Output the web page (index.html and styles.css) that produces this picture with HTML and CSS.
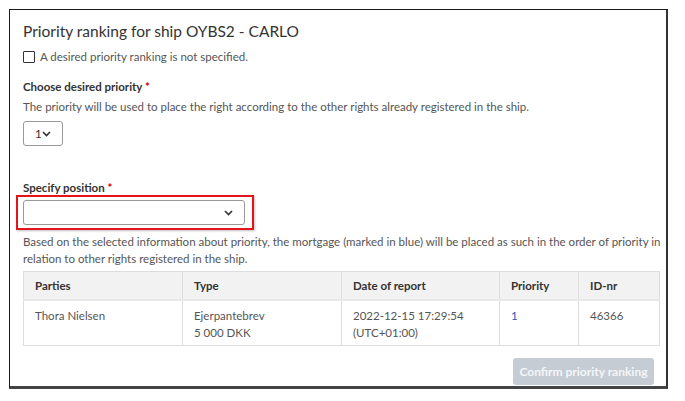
FILE: index.html
```html
<!DOCTYPE html>
<html>
<head>
    <title>Priority ranking</title>
    <link rel="stylesheet" href="styles.css">
</head>
<body>
    <div class="panel">
        <h1>Priority ranking for ship OYBS2 - CARLO</h1>

        <label class="check">
            <span class="box"></span>
            A desired priority ranking is not specified.
        </label>

        <div class="field">
            <div class="label">Choose desired priority <span class="req">*</span></div>
            <p class="hint">The priority will be used to place the right according to the other rights already registered in the ship.</p>
            <div class="select small">
                <span>1</span>
                <svg width="9" height="6" viewBox="0 0 9 6"><path d="M1 1 L4.5 4.5 L8 1" fill="none" stroke="#333" stroke-width="1.6"/></svg>
            </div>
        </div>

        <div class="field position">
            <div class="label">Specify position <span class="req">*</span></div>
            <div class="highlight">
                <div class="select wide">
                    <span></span>
                    <svg width="9" height="6" viewBox="0 0 9 6"><path d="M1 1 L4.5 4.5 L8 1" fill="none" stroke="#333" stroke-width="1.6"/></svg>
                </div>
            </div>
        </div>

        <p class="note">Based on the selected information about priority, the mortgage (marked in blue) will be placed as such in the order of priority in relation to other rights registered in the ship.</p>

        <table class="rights">
            <thead>
                <tr>
                    <th class="c1">Parties</th>
                    <th class="c2">Type</th>
                    <th class="c3">Date of report</th>
                    <th class="c4">Priority</th>
                    <th class="c5">ID-nr</th>
                </tr>
            </thead>
            <tbody>
                <tr>
                    <td>Thora Nielsen</td>
                    <td>Ejerpantebrev<br>5 000 DKK</td>
                    <td>2022-12-15 17:29:54<br>(UTC+01:00)</td>
                    <td class="blue">1</td>
                    <td>46366</td>
                </tr>
            </tbody>
        </table>

        <div class="actions">
            <button class="confirm" disabled>Confirm priority ranking</button>
        </div>
    </div>
</body>
</html>
```

FILE: styles.css
```css
body {
    margin: 0;
    padding: 9px 0 0 9px;
    background-color: #fff;
    font-family: Lato, "Open Sans", sans-serif;
    color: #555;
    font-size: 11.5px;
}

.panel {
    width: 659px;
    height: 380px;
    border: 1px solid #1a1a1a;
    border-right: 2px solid #333;
    border-bottom: 3px solid #444;
    padding: 11px 0 0 13px;
    box-sizing: border-box;
}

h1 {
    margin: 0;
    font-size: 15.5px;
    font-weight: normal;
    color: #333;
    line-height: 20px;
}

.check {
    display: flex;
    align-items: center;
    gap: 5px;
    margin-top: 8px;
    line-height: 16px;
}

.box {
    width: 10px;
    height: 10px;
    border: 1.5px solid #333;
    border-radius: 1px;
}

.field {
    margin-top: 14px;
}

.label {
    font-weight: bold;
    color: #333;
    line-height: 16px;
}

.req {
    color: #c00;
}

.hint {
    margin: 4px 0 0 0;
    line-height: 16px;
}

.select {
    display: flex;
    align-items: center;
    justify-content: space-between;
    border: 1px solid #999;
    border-radius: 3px;
    box-sizing: border-box;
    color: #333;
}

.select.small {
    margin-top: 6px;
    width: 40px;
    height: 25px;
    padding: 0 11px 0 11px;
}

.select.wide {
    width: 222px;
    height: 25px;
    padding: 0 11px 0 10px;
    background: #fff;
}

.position {
    margin-top: 35px;
}

.position .label {
    line-height: 14px;
}

.highlight {
    margin: 0 0 0 -7px;
    width: 238px;
    box-sizing: border-box;
    border: 2px solid #e3141b;
    padding: 3px 0 3px 5px;
    box-shadow: 1px 1px 2px rgba(0, 0, 0, 0.25);
}

.note {
    margin: 3px 0 0 0;
    width: 640px;
    line-height: 17px;
}

.rights {
    margin-top: 4px;
    width: 637px;
    border-collapse: collapse;
    border: 1px solid #ddd;
}

.rights th {
    background-color: #f2f2f2;
    color: #333;
    font-weight: bold;
    text-align: left;
    height: 27px;
    padding: 0 11px;
    border-left: 1px solid #ddd;
    border-bottom: 2px solid #e8e8e8;
}

.rights td {
    vertical-align: top;
    padding: 6px 11px 4px 11px;
    line-height: 17px;
    border-left: 1px solid #ddd;
    height: 34px;
}

.c1 { width: 136px; }
.c2 { width: 136px; }
.c3 { width: 135px; }
.c4 { width: 56px; }

.blue {
    color: #1a5fa8;
}

.actions {
    display: flex;
    justify-content: flex-end;
    width: 631px;
    margin-top: 12px;
}

.confirm {
    font-family: inherit;
    font-size: 12px;
    font-weight: bold;
    color: #f4f6f8;
    background-color: #c5ccd4;
    border: none;
    border-radius: 3px;
    width: 141px;
    height: 27px;
}
```
